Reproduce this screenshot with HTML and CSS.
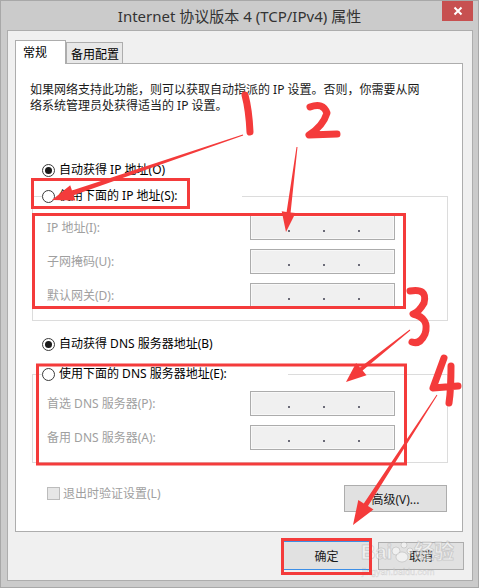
FILE: index.html
```html
<!DOCTYPE html>
<html lang="zh">
<head>
  <meta charset="UTF-8">
  <meta name="viewport" content="width=device-width, initial-scale=1.0">
  <title>Internet 协议版本 4 (TCP/IPv4) 属性</title>
  <link rel="stylesheet" href="styles.css">
</head>
<body>
  <div class="window">
    <div class="titlebar">
      <span></span>
      <div class="title">Internet 协议版本 4 (TCP/IPv4) 属性</div>
      <div class="close">
        <svg width="10" height="10" viewBox="0 0 10 10"><path d="M1.5 1.5 L8.5 8.5 M8.5 1.5 L1.5 8.5" stroke="#fff" stroke-width="2"/></svg>
      </div>
    </div>

    <div class="client">
      <div class="tabs">
        <div class="tab active">常规</div>
        <div class="tab">备用配置</div>
      </div>

      <div class="panel">
        <p class="intro">如果网络支持此功能，则可以获取自动指派的 IP 设置。否则，你需要从网<br>络系统管理员处获得适当的 IP 设置。</p>

        <div class="option opt-ip"><span class="radio checked"></span>自动获得 IP 地址(O)</div>

        <fieldset class="group group-ip">
          <legend class="option legend-ip"><span class="radio"></span>使用下面的 IP 地址(S):</legend>
          <div class="fields">
            <label>IP 地址(I):</label>
            <div class="ip"><i></i><i></i><i></i></div>
            <label>子网掩码(U):</label>
            <div class="ip"><i></i><i></i><i></i></div>
            <label>默认网关(D):</label>
            <div class="ip"><i></i><i></i><i></i></div>
          </div>
        </fieldset>

        <div class="option opt-dns"><span class="radio checked"></span>自动获得 DNS 服务器地址(B)</div>

        <fieldset class="group group-dns">
          <legend class="option legend-dns"><span class="radio"></span>使用下面的 DNS 服务器地址(E):</legend>
          <div class="fields">
            <label>首选 DNS 服务器(P):</label>
            <div class="ip"><i></i><i></i><i></i></div>
            <label>备用 DNS 服务器(A):</label>
            <div class="ip"><i></i><i></i><i></i></div>
          </div>
        </fieldset>

        <div class="bottom-row">
          <div class="check"><span class="box"></span>退出时验证设置(L)</div>
          <button class="btn btn-adv" type="button">高级(V)...</button>
        </div>
      </div>

      <div class="actions">
        <button class="btn btn-ok" type="button">确定</button>
        <button class="btn btn-cancel" type="button">取消</button>
      </div>
    </div>
  </div>

  <!-- red hand-drawn notes on top of the dialog -->
  <svg class="marks" width="479" height="588" viewBox="0 0 479 588">
    <g class="watermark">
      <text x="361" y="559" class="wm-big">Bai</text>
      <circle cx="396" cy="551" r="4"/><circle cx="404" cy="545" r="3"/><circle cx="410" cy="551" r="3"/><ellipse cx="402" cy="557" rx="6" ry="5"/>
      <text x="414" y="559" class="wm-big">经验</text>
      <text x="362" y="575" class="wm-small">jingyan.baidu.com</text>
    </g>
    <g fill="none" stroke="#f43b3b" stroke-width="3">
      <rect x="32.5" y="179.5" width="156" height="28"/>
      <rect x="33.5" y="214.5" width="371" height="93"/>
      <rect x="37.5" y="365" width="368" height="99"/>
      <rect x="282.5" y="539.5" width="88" height="34"/>
    </g>
    <g fill="none" stroke="#f43b3b" stroke-width="7" stroke-linecap="round" stroke-linejoin="round">
      <path d="M245 95 Q249 110 250 132"/>
      <path d="M310 107 Q323 102 327 113 Q323 126 309 135 L337 134"/>
      <path d="M410 291 Q428 288 424 303 Q419 312 413 314 Q430 318 425 334 Q420 345 412 342"/>
      <path d="M444 358 L433 388 L458 386 M451 366 Q451 390 449 403"/>
    </g>
    <g fill="#f43b3b">
      <polygon points="242.8,134.5 243.2,135.5 73.6,195.3 75.4,200.5 52,200 70.2,185.3 72.0,190.5"/>
      <polygon points="296.5,146.9 297.5,147.1 290.6,212.5 295.5,213.1 286,232 281.7,211.3 286.6,211.9"/>
      <polygon points="409.7,329.6 410.3,330.4 362.6,370.6 366.5,375.2 346,382 356.1,363.0 360.0,367.6"/>
      <polygon points="436.6,394.7 437.4,395.3 368.0,506.1 373.5,509.6 353,525 358.3,500.0 363.8,503.5"/>
    </g>
  </svg>
</body>
</html>
```

FILE: styles.css
```css
body {
  margin: 0;
  position: relative;
  width: 479px;
  height: 588px;
  font-family: 'Noto Sans', 'Noto Sans CJK SC', sans-serif;
  font-size: 12px;
  color: #1a1a1a;
}
.window {
  width: 479px;
  height: 588px;
  box-sizing: border-box;
  border: 1px solid #a8a8a8;
  background: #cbcbcb;
  display: flex;
  flex-direction: column;
}
.titlebar {
  height: 29px;
  flex: none;
  display: grid;
  grid-template-columns: 1fr auto 1fr;
}
.title {
  align-self: center;
  font-size: 15px;
  color: #333;
  white-space: nowrap;
  line-height: 20px;
  margin-top: 1px;
}
.close {
  justify-self: end;
  width: 31px;
  height: 20px;
  margin-right: 5px;
  background: #c75050;
  display: flex;
  align-items: center;
  justify-content: center;
}
.client {
  flex: 1;
  margin: 0 5px 6px 6px;
  border: 1px solid #adadad;
  background: #f0f0f0;
  padding: 9px 0 0 7px;
}
.tabs {
  display: flex;
  align-items: flex-end;
  height: 23px;
}
.tab {
  box-sizing: border-box;
  height: 21px;
  width: 57px;
  border: 1px solid #adadad;
  border-bottom: none;
  background: #e8e8e8;
  display: flex;
  align-items: center;
  padding: 1px 0 0 4px;
  white-space: nowrap;
  color: #000;
}
.tab.active {
  height: 24px;
  width: 51px;
  margin-bottom: -1px;
  background: #fff;
  position: relative;
  z-index: 1;
  padding: 0 0 2px 7px;
}
.panel {
  box-sizing: border-box;
  width: 448px;
  height: 469px;
  border: 1px solid #adadad;
  background: #fff;
}
.intro {
  margin: 18px 0 0 14px;
  line-height: 16px;
  white-space: nowrap;
  color: #1a1a1a;
}
.option {
  display: flex;
  align-items: center;
  height: 16px;
  line-height: 16px;
  white-space: nowrap;
  color: #000;
}
.radio {
  box-sizing: border-box;
  width: 13px;
  height: 13px;
  border: 1px solid #3a3a3a;
  border-radius: 50%;
  background: #fff;
  margin-right: 4px;
  flex: none;
  display: flex;
  align-items: center;
  justify-content: center;
}
.radio.checked::after {
  content: '';
  width: 7px;
  height: 7px;
  border-radius: 50%;
  background: #1a1a1a;
}
.opt-ip {
  margin: 48px 0 0 26px;
}
.opt-dns {
  margin: 15px 0 0 26px;
}
.group {
  margin: 10px 0 0 16px;
  width: 416px;
  box-sizing: border-box;
  border: 1px solid #dcdcdc;
  padding: 11px 0 12px 0;
}
.group-dns {
  margin-top: 14px;
  padding-top: 9px;
}
.legend-ip {
  margin-left: 9px;
  padding: 0;
  width: 200px;
  background: #fff;
}
.legend-dns {
  margin-left: 9px;
  padding: 0;
  width: 246px;
  background: #fff;
}
.fields {
  display: grid;
  grid-template-columns: 203px 145px;
  row-gap: 9px;
  padding-left: 14px;
}
.fields label {
  color: #a0a0a0;
  line-height: 25px;
  white-space: nowrap;
}
.ip {
  box-sizing: border-box;
  height: 25px;
  border: 1px solid #acacac;
  background: #f0f0f0;
  box-shadow: inset 0 0 0 1px #f8f8f8;
  display: flex;
  align-items: center;
  padding-left: 37px;
  gap: 33px;
}
.ip i {
  width: 2px;
  height: 2px;
  background: #6b6b78;
  margin-top: 6px;
}
.bottom-row {
  display: flex;
  justify-content: space-between;
  align-items: flex-start;
  margin-top: 22px;
  padding: 0 15px 0 31px;
}
.check {
  display: flex;
  align-items: center;
  height: 16px;
  color: #a0a0a0;
  white-space: nowrap;
}
.box {
  box-sizing: border-box;
  width: 13px;
  height: 13px;
  border: 1px solid #bcbcbc;
  background: #e6e6e6;
  margin-right: 3px;
}
.btn {
  box-sizing: border-box;
  font-family: 'Noto Sans', 'Noto Sans CJK SC', sans-serif;
  font-size: 12px;
  color: #1a1a1a;
  background: #e1e1e1;
  border: 1px solid #adadad;
  padding: 0;
  margin: 0;
}
.btn-adv {
  width: 103px;
  height: 27px;
}
.actions {
  display: flex;
  justify-content: flex-end;
  gap: 8px;
  margin-top: 9px;
  padding-right: 8px;
}
.btn-ok {
  width: 87px;
  height: 29px;
  border-color: #3c8ee6;
}
.btn-cancel {
  width: 86px;
  height: 28px;
  margin-top: 1px;
}
.marks {
  position: absolute;
  left: 0;
  top: 0;
  pointer-events: none;
}
.watermark {
  fill: rgba(255, 255, 255, 0.5);
  stroke: rgba(140, 140, 140, 0.3);
  stroke-width: 1;
}
.wm-big {
  font-family: 'Liberation Sans', 'Noto Sans CJK SC', sans-serif;
  font-size: 20px;
  font-weight: bold;
}
.wm-small {
  font-family: 'Liberation Sans', sans-serif;
  font-size: 9px;
  stroke-width: 0.5;
}
```
